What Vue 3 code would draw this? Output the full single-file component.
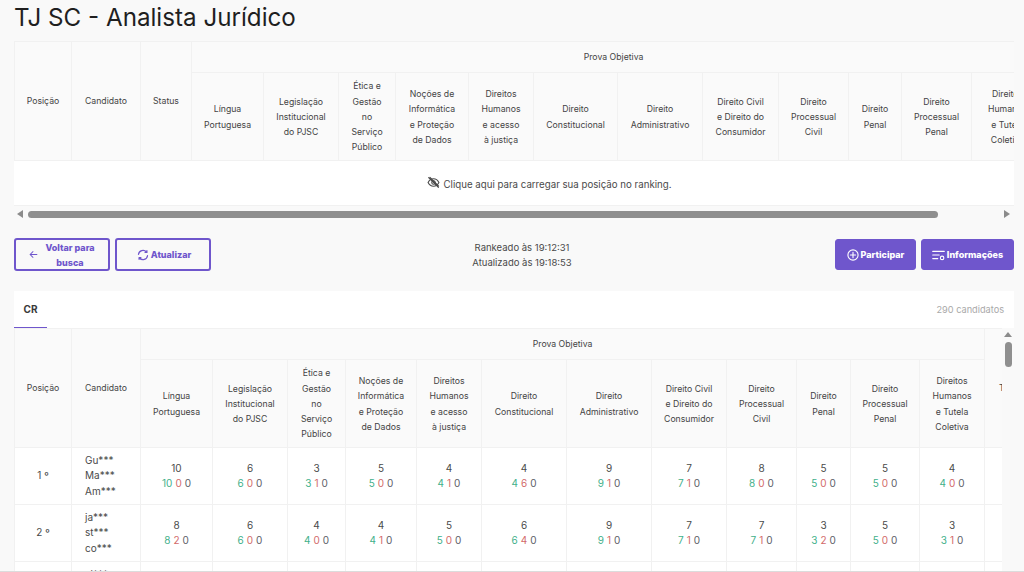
<template>
  <div class="page">
    <h1 class="title">TJ SC - Analista Jurídico</h1>

    <section class="top-wrap">
      <div class="top-clip">
        <table class="grid top-table">
          <colgroup>
            <col v-for="(w, i) in topWidths" :key="i" :style="{ width: w + 'px' }" />
          </colgroup>
          <thead>
            <tr class="head-one">
              <th rowspan="2">Posição</th>
              <th rowspan="2">Candidato</th>
              <th rowspan="2">Status</th>
              <th :colspan="subjects.length" class="group">Prova Objetiva</th>
            </tr>
            <tr class="head-two">
              <th v-for="s in subjects" :key="s.id">
                <span v-for="l in s.lines" :key="l" class="line">{{ l }}</span>
              </th>
            </tr>
          </thead>
        </table>
        <div class="load-row">
          <svg class="eye" viewBox="0 0 24 24" fill="none" stroke="currentColor" stroke-width="2" stroke-linecap="round">
            <path d="M2 12c2.200-4.400 5.800-7 10-7s7.800 2.600 10 7c-2.200 4.400-5.800 7-10 7s-7.800-2.600-10-7z" />
            <circle cx="12" cy="12" r="3.200" />
            <path d="M3 3l18 18M5.500 2.500l16 16" />
          </svg>
          <span>Clique aqui para carregar sua posição no ranking.</span>
        </div>
      </div>
      <div class="hbar">
        <span class="arrow-left"></span>
        <span class="hthumb"></span>
        <span class="arrow-right"></span>
      </div>
    </section>

    <div class="actions">
      <div class="btn-group">
        <button class="btn outline back">
          <svg class="ico small" viewBox="0 0 16 16" fill="none" stroke="currentColor" stroke-width="1.800" stroke-linecap="round" stroke-linejoin="round">
            <path d="M14 8H2M7 3L2 8l5 5" />
          </svg>
          <span>Voltar para<br />busca</span>
        </button>
        <button class="btn outline refresh">
          <svg class="ico" viewBox="0 0 16 16" fill="none" stroke="currentColor" stroke-width="1.700" stroke-linecap="round" stroke-linejoin="round">
            <path d="M2 7A6 6 0 0 1 12.600 4M14 9A6 6 0 0 1 3.400 12" />
            <path d="M13.200 2.200V4.600H10.800M2.800 13.800V11.400H5.200" />
          </svg>
          <span>Atualizar</span>
        </button>
      </div>
      <div class="stamps">
        <div>Rankeado às 19:12:31</div>
        <div>Atualizado às 19:18:53</div>
      </div>
      <div class="btn-group">
        <button class="btn solid join">
          <svg class="ico" viewBox="0 0 16 16" fill="none" stroke="currentColor" stroke-width="1.500" stroke-linecap="round">
            <circle cx="8" cy="8" r="6.800" />
            <path d="M8 4.500v7M4.500 8h7" />
          </svg>
          <span>Participar</span>
        </button>
        <button class="btn solid info">
          <svg class="ico wide" viewBox="0 0 18 16" fill="none" stroke="currentColor" stroke-width="1.500" stroke-linecap="round">
            <path d="M1 3h16M1 8h9M1 13h7" />
            <circle cx="14" cy="12" r="2.400" />
          </svg>
          <span>Informações</span>
        </button>
      </div>
    </div>

    <section class="rank-card">
      <div class="tabs">
        <span class="tab">CR</span>
        <span class="count">290 candidatos</span>
      </div>
      <div class="rank-body">
        <div class="rank-clip">
          <table class="grid rank-table">
            <colgroup>
              <col v-for="(w, i) in rankWidths" :key="i" :style="{ width: w + 'px' }" />
            </colgroup>
            <thead>
              <tr class="head-one">
                <th rowspan="2">Posição</th>
                <th rowspan="2">Candidato</th>
                <th :colspan="subjects.length" class="group">Prova Objetiva</th>
                <th rowspan="2" class="total">Total</th>
              </tr>
              <tr class="head-two">
                <th v-for="s in subjects" :key="s.id">
                  <span v-for="l in s.lines" :key="l" class="line">{{ l }}</span>
                </th>
              </tr>
            </thead>
            <tbody>
              <tr v-for="r in rows" :key="r.pos">
                <td class="pos">{{ r.pos }} º</td>
                <td class="names">
                  <span v-for="n in r.names" :key="n" class="line">{{ n }}</span>
                </td>
                <td v-for="(c, i) in r.cells" :key="i">
                  <span class="line">{{ c[0] }}</span>
                  <span class="line score">
                    <span class="ok">{{ c[0] }}</span>
                    <span class="bad">{{ c[1] }}</span>
                    <span class="nil">{{ c[2] }}</span>
                  </span>
                </td>
                <td></td>
              </tr>
            </tbody>
          </table>
        </div>
        <div class="vbar">
          <span class="arrow-up"></span>
          <span class="vthumb"></span>
        </div>
      </div>
    </section>
  </div>
</template>

<script setup>
const subjects = [
  { id: 1, lines: ['Língua', 'Portuguesa'] },
  { id: 2, lines: ['Legislação', 'Institucional', 'do PJSC'] },
  { id: 3, lines: ['Ética e', 'Gestão', 'no', 'Serviço', 'Público'] },
  { id: 4, lines: ['Noções de', 'Informática', 'e Proteção', 'de Dados'] },
  { id: 5, lines: ['Direitos', 'Humanos', 'e acesso', 'à justiça'] },
  { id: 6, lines: ['Direito', 'Constitucional'] },
  { id: 7, lines: ['Direito', 'Administrativo'] },
  { id: 8, lines: ['Direito Civil', 'e Direito do', 'Consumidor'] },
  { id: 9, lines: ['Direito', 'Processual', 'Civil'] },
  { id: 10, lines: ['Direito', 'Penal'] },
  { id: 11, lines: ['Direito', 'Processual', 'Penal'] },
  { id: 12, lines: ['Direitos', 'Humanos', 'e Tutela', 'Coletiva'] }
]

const topWidths = [57, 69, 51, 72, 75, 57, 73, 65, 84, 85, 76, 70, 53, 70, 72]
const rankWidths = [57, 69, 72, 75, 58, 71, 65, 85, 85, 75, 70, 54, 69, 65, 60]

const rows = [
  {
    pos: 1,
    names: ['Gu***', 'Ma***', 'Am***'],
    cells: [[10, 0, 0], [6, 0, 0], [3, 1, 0], [5, 0, 0], [4, 1, 0], [4, 6, 0], [9, 1, 0], [7, 1, 0], [8, 0, 0], [5, 0, 0], [5, 0, 0], [4, 0, 0]]
  },
  {
    pos: 2,
    names: ['ja***', 'st***', 'co***'],
    cells: [[8, 2, 0], [6, 0, 0], [4, 0, 0], [4, 1, 0], [5, 0, 0], [6, 4, 0], [9, 1, 0], [7, 1, 0], [7, 1, 0], [3, 2, 0], [5, 0, 0], [3, 1, 0]]
  },
  {
    pos: 3,
    names: ['al***', 'li***', 'pe***'],
    cells: [[9, 1, 0], [5, 1, 0], [4, 0, 0], [4, 1, 0], [5, 0, 0], [6, 4, 0], [8, 2, 0], [7, 1, 0], [7, 1, 0], [4, 1, 0], [5, 0, 0], [4, 0, 0]]
  }
]
</script>

<style>
html,
body {
  margin: 0;
  background: #f9f9f9;
  overflow: hidden;
}
</style>

<style scoped>
.page {
  height: 572px;
  overflow: hidden;
  box-sizing: border-box;
  padding: 0 10px 0 14px;
  font-family: Inter, "Liberation Sans", sans-serif;
  color: #4a4a4a;
  background: #f9f9f9;
  border-bottom: 1px solid #dcdcdc;
}

.title {
  margin: 0;
  height: 41px;
  font-size: 24.2px;
  line-height: 35px;
  font-weight: 400;
  color: #1f1f1f;
}

.top-wrap {
  height: 181px;
}

.top-clip {
  overflow: hidden;
}

.grid {
  table-layout: fixed;
  border-collapse: collapse;
  font-size: 8.7px;
}

.top-table {
  width: 1029px;
}

.rank-table {
  width: 1030px;
}

.grid th {
  font-weight: 400;
  padding: 2px 0 0;
  text-align: center;
  color: #444;
  background: #fafafa;
  border: 1px solid #f1f1f1;
  line-height: 15.3px;
}

.head-one .group {
  height: 28px;
}

.top-table .group {
  padding-right: 8px;
}

.head-two th {
  height: 85px;
}

.line {
  display: block;
  white-space: nowrap;
}

.load-row {
  height: 45px;
  background: #fff;
  display: flex;
  align-items: center;
  justify-content: center;
  gap: 4px;
  padding-left: 70px;
  padding-top: 2px;
  font-size: 9.7px;
  color: #4a4a4a;
  border-bottom: 1px solid #f1f1f1;
  box-sizing: border-box;
}

.eye {
  width: 13px;
  height: 13px;
  margin-top: -3px;
}

.hbar {
  height: 16px;
  display: flex;
  align-items: center;
  background: #f9f9f9;
}

.arrow-left {
  width: 0;
  height: 0;
  margin-left: 3px;
  border: 4px solid transparent;
  border-left: 0;
  border-right: 6px solid #8b8b8b;
}

.hthumb {
  width: 910px;
  height: 7px;
  margin-left: 5px;
  border-radius: 4px;
  background: #8f8f8f;
}

.arrow-right {
  width: 0;
  height: 0;
  margin-left: 66px;
  border: 4px solid transparent;
  border-right: 0;
  border-left: 6px solid #8b8b8b;
}

.actions {
  height: 69px;
  display: flex;
  align-items: flex-start;
  justify-content: space-between;
  padding-top: 16px;
  box-sizing: border-box;
}

.btn-group {
  display: flex;
  gap: 5px;
}

.btn {
  box-sizing: border-box;
  display: flex;
  align-items: center;
  justify-content: center;
  gap: 2px;
  border-radius: 3px;
  font-family: inherit;
  font-size: 9px;
  font-weight: 800;
  line-height: 15px;
  padding: 0;
  margin: 0;
}

.outline {
  height: 33px;
  background: transparent;
  color: #6f56cc;
  border: 2px solid #6f56cc;
}

.solid {
  height: 31px;
  margin-top: 1px;
  background: #6f56cc;
  color: #fff;
  border: 1px solid #6f56cc;
}

.back {
  width: 96px;
  gap: 7px;
}

.refresh {
  width: 96px;
  padding-left: 2px;
}

.join {
  width: 81px;
}

.info {
  width: 93px;
}

.ico {
  width: 12px;
  height: 12px;
  flex: none;
}

.ico.small {
  width: 9px;
  height: 9px;
}

.ico.wide {
  width: 13px;
}

.stamps {
  padding-top: 2px;
  font-size: 9.5px;
  line-height: 15px;
  text-align: center;
  color: #4a4a4a;
  margin-right: 2px;
}

.rank-card {
  height: 281px;
  background: #fff;
  overflow: hidden;
}

.tabs {
  height: 37px;
  display: flex;
  align-items: center;
  justify-content: space-between;
  box-sizing: border-box;
  padding-right: 10px;
}

.tab {
  width: 33px;
  height: 37px;
  box-sizing: border-box;
  line-height: 36px;
  text-align: center;
  font-size: 10px;
  font-weight: 700;
  color: #3a3a3a;
  border-bottom: 1px solid #6f56cc;
}

.count {
  font-size: 9.2px;
  color: #a9a9a9;
}

.rank-body {
  display: flex;
}

.rank-clip {
  width: 988px;
  overflow: hidden;
  flex: none;
}

.rank-table .total {
  padding-left: 14px;
  text-align: left;
}

.rank-table td {
  height: 56px;
  padding: 0;
  text-align: center;
  font-size: 10px;
  line-height: 15.5px;
  color: #4a4a4a;
  background: #fff;
  border: 1px solid #f1f1f1;
}

.rank-table td.names {
  text-align: left;
  padding-left: 13px;
  font-size: 10px;
}

.score {
  display: flex;
  justify-content: center;
  gap: 3px;
}

.ok {
  color: #3fb08a;
}

.bad {
  color: #d26a6a;
}

.nil {
  color: #5c6068;
}

.vbar {
  flex: 1;
  display: flex;
  flex-direction: column;
  align-items: center;
  background: #f9f9f9;
  padding-top: 4px;
}

.arrow-up {
  width: 0;
  height: 0;
  border: 4px solid transparent;
  border-top: 0;
  border-bottom: 5px solid #8b8b8b;
}

.vthumb {
  width: 7px;
  height: 25px;
  margin-top: 5px;
  border-radius: 4px;
  background: #8f8f8f;
}
</style>
